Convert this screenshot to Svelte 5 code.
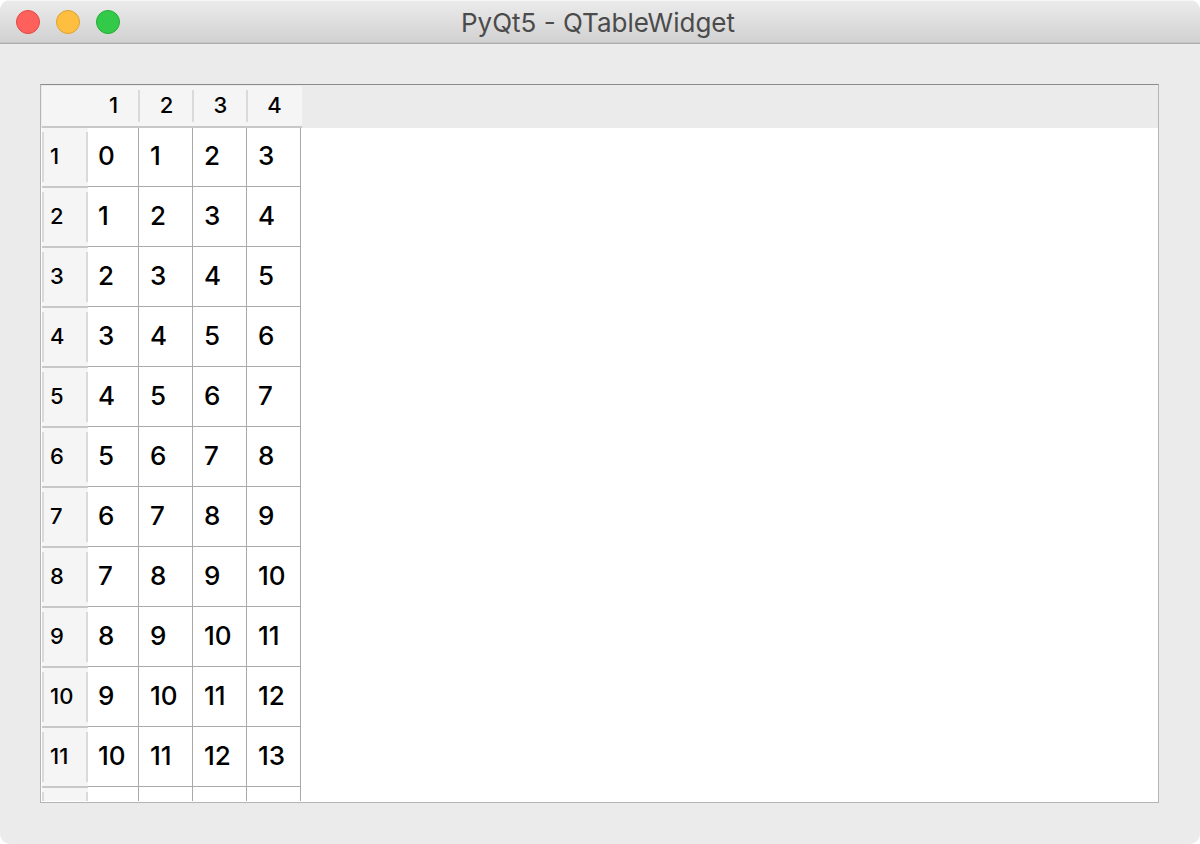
<script>
  const columns = [1, 2, 3, 4];
  const rows = Array.from({ length: 11 }, (_, r) => columns.map((_, c) => r + c));
</script>

<div class="window">
  <header class="titlebar">
    <div class="controls">
      <button class="dot close" aria-label="Close"></button>
      <button class="dot minimize" aria-label="Minimize"></button>
      <button class="dot zoom" aria-label="Zoom"></button>
    </div>
    <h1>PyQt5 - QTableWidget</h1>
    <div></div>
  </header>

  <main>
    <div class="frame">
      <div class="view">
        <table>
          <colgroup>
            <col class="index" />
            <col class="first" />
            <col /><col /><col />
          </colgroup>
          <thead>
            <tr>
              <td class="corner"></td>
              {#each columns as column}
                <th scope="col">{column}</th>
              {/each}
            </tr>
          </thead>
          <tbody>
            {#each rows as row, r}
              <tr>
                <th scope="row">{r + 1}</th>
                {#each row as value}
                  <td>{value}</td>
                {/each}
              </tr>
            {/each}
            <tr>
              <th scope="row"></th>
              {#each columns as _}
                <td></td>
              {/each}
            </tr>
          </tbody>
        </table>
      </div>
    </div>
  </main>
</div>

<style>
  :global(body) {
    margin: 0;
    background: #fff;
  }

  .window {
    display: flex;
    flex-direction: column;
    height: 100vh;
    box-sizing: border-box;
    overflow: hidden;
    border-radius: 10px;
    background: #ebebeb;
    font-family: Inter, "Liberation Sans", sans-serif;
    color: #000;
  }

  .titlebar {
    display: grid;
    grid-template-columns: 1fr auto 1fr;
    align-items: center;
    height: 44px;
    box-sizing: border-box;
    flex: none;
    padding: 0 16px;
    border-top: 1px solid #f6f6f6;
    border-bottom: 1px solid #acacac;
    background: linear-gradient(#ebebeb, #d1d1d1);
    box-shadow: inset 0 -1px #c5c5c5;
  }

  .controls {
    display: flex;
    gap: 16px;
  }

  .dot {
    width: 24px;
    height: 24px;
    padding: 0;
    border: 1px solid;
    border-radius: 50%;
  }

  .close {
    background: #fe615c;
    border-color: #e24843;
  }

  .minimize {
    background: #febf40;
    border-color: #dfa032;
  }

  .zoom {
    background: #34ca49;
    border-color: #24ac34;
  }

  h1 {
    margin: 0;
    padding: 2px 4px 0 0;
    font-size: 26px;
    line-height: 32px;
    font-weight: 400;
    color: #4b4b4b;
    white-space: nowrap;
  }

  main {
    display: flex;
    flex: 1;
    min-height: 0;
    padding: 40px 41px 41px 40px;
  }

  .frame {
    flex: 1;
    min-width: 0;
    padding: 1px;
    border: 1px solid #b4b4b4;
    border-top-color: #8b8b8b;
    background: linear-gradient(#ebebeb 43px, #fff 43px);
    box-sizing: border-box;
  }

  .view {
    height: 100%;
    overflow: hidden;
  }

  table {
    width: 260px;
    table-layout: fixed;
    border-spacing: 0;
    font-size: 26px;
    line-height: 32px;
    font-weight: 500;
  }

  col {
    width: 54px;
  }

  .index {
    width: 46px;
  }

  .first {
    width: 52px;
  }

  th,
  td {
    box-sizing: border-box;
    padding: 0;
  }

  th {
    font-size: 22px;
    font-weight: 500;
  }

  thead th,
  .corner {
    height: 42px;
    padding: 0 1px 2px 0;
    border-bottom: 2px solid #c8c8c8;
    background: #f5f5f5;
  }

  thead th:not(:last-child) {
    background: linear-gradient(#dadada, #dadada) right 4px / 2px 32px no-repeat #f5f5f5;
  }

  tbody th {
    height: 60px;
    padding: 0 0 2px 8px;
    text-align: left;
    border-bottom: 2px solid #c8c8c8;
    background:
      linear-gradient(#dadada, #dadada) left 4px / 2px 50px no-repeat,
      linear-gradient(#dadada, #dadada) right 4px / 2px 50px no-repeat,
      #f5f5f5;
  }

  tbody td {
    height: 60px;
    padding: 0 0 4px 10px;
    background:
      linear-gradient(#a9a9a9, #a9a9a9) right 1px top / 1px 100% no-repeat,
      linear-gradient(#a9a9a9, #a9a9a9) left bottom 1px / 100% 1px no-repeat;
  }

  tbody td:last-child {
    background:
      linear-gradient(#a9a9a9, #a9a9a9) right 1px top / 1px 100% no-repeat,
      linear-gradient(#a9a9a9, #a9a9a9) right 1px bottom 1px / 53px 1px no-repeat;
  }
</style>
